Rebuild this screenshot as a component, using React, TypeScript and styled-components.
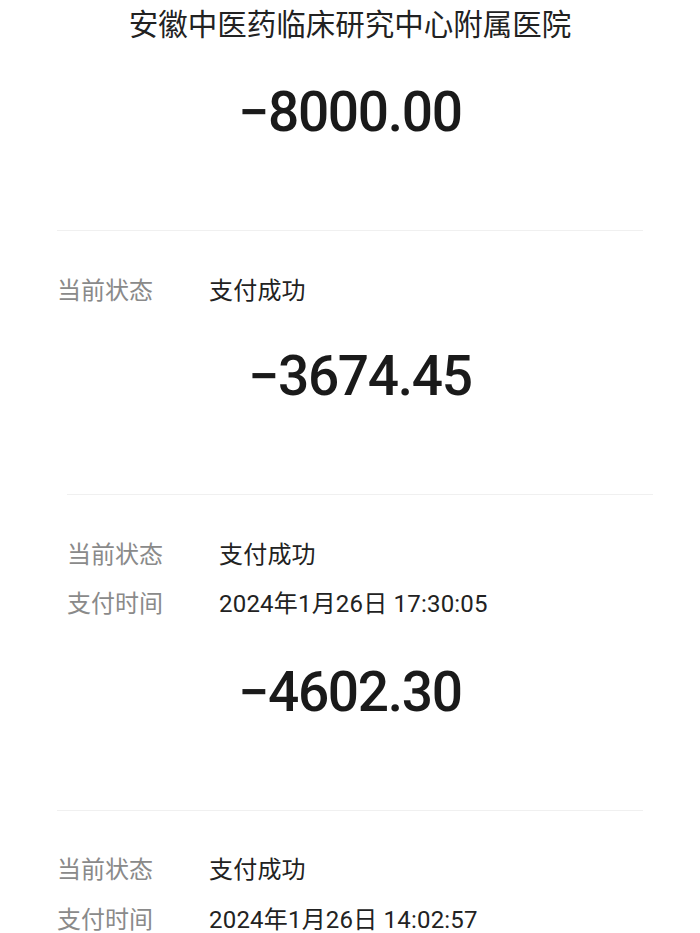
import React from "react";
import styled, { createGlobalStyle } from "styled-components";

const Global = createGlobalStyle`
  html, body { margin: 0; padding: 0; background: #ffffff; }
  body { font-family: Roboto, "Noto Sans CJK SC", sans-serif; -webkit-font-smoothing: antialiased; }
`;

const Page = styled.div`
  width: 700px;
  height: 933px;
  overflow: hidden;
  background: #ffffff;
  display: flex;
  flex-direction: column;
`;

const Title = styled.div`
  font-family: "Noto Sans CJK SC", sans-serif;
  font-size: 29.5px;
  line-height: 44px;
  color: #222222;
  text-align: center;
  padding: 0 57px;
`;

const Panel = styled.section<{ $shift: number; $top: number }>`
  display: flex;
  flex-direction: column;
  padding-left: ${(p) => 57 + p.$shift}px;
  padding-right: ${(p) => 57 - p.$shift}px;
  margin-top: ${(p) => p.$top}px;
`;

const Amount = styled.div`
  font-family: Roboto, sans-serif;
  font-weight: 500;
  font-size: 55px;
  line-height: 64px;
  color: #1a1a1a;
  text-align: center;
  letter-spacing: -1.3px;
`;

const Divider = styled.hr`
  margin: 86px 0 0;
  border: none;
  height: 1px;
  background: #f0f0f0;
`;

const Rows = styled.div`
  display: grid;
  grid-template-columns: 152px 1fr;
  grid-auto-rows: 29px;
  row-gap: 20.5px;
  padding-top: 45.5px;
  align-items: center;
`;

const Cell = styled.div<{ $muted?: boolean }>`
  font-family: Roboto, "Noto Sans CJK SC", sans-serif;
  font-size: 24px;
  line-height: 29px;
  letter-spacing: ${(p) => (p.$muted ? "0" : "0.2px")};
  color: ${(p) => (p.$muted ? "#8a8a8a" : "#222222")};
`;

type Item = { amount: string; rows: [string, string][]; shift: number; top: number };

const items: Item[] = [
  { amount: "−8000.00", rows: [["当前状态", "支付成功"]], shift: 0, top: 36 },
  {
    amount: "−3674.45",
    rows: [
      ["当前状态", "支付成功"],
      ["支付时间", "2024年1月26日 17:30:05"],
    ],
    shift: 10,
    top: 38.5,
  },
  {
    amount: "−4602.30",
    rows: [
      ["当前状态", "支付成功"],
      ["支付时间", "2024年1月26日 14:02:57"],
    ],
    shift: 0,
    top: 40.5,
  },
];

export default function App() {
  return (
    <Page>
      <Global />
      <Title>安徽中医药临床研究中心附属医院</Title>
      {items.map((it, i) => (
        <Panel key={i} $shift={it.shift} $top={it.top}>
          <Amount>{it.amount}</Amount>
          <Divider />
          <Rows>
            {it.rows.map(([l, v]) => (
              <React.Fragment key={l}>
                <Cell $muted>{l}</Cell>
                <Cell>{v}</Cell>
              </React.Fragment>
            ))}
          </Rows>
        </Panel>
      ))}
    </Page>
  );
}
